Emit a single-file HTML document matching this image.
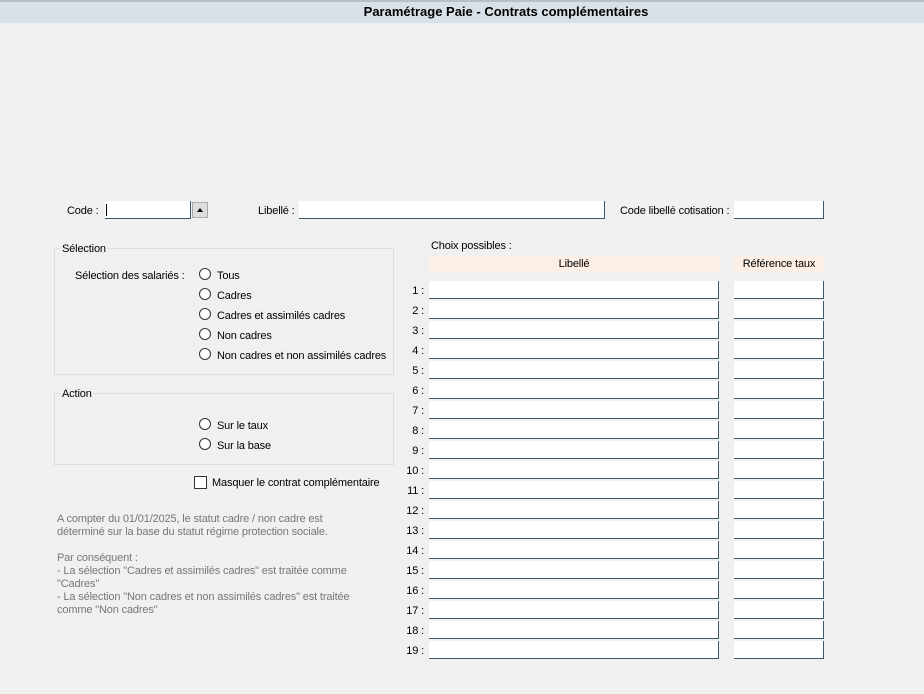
<!DOCTYPE html><html><head><style>
body{margin:0;width:924px;height:694px;background:#f0f0f0;font-family:"Liberation Sans",sans-serif;font-size:11px;letter-spacing:-0.15px;color:#000;position:relative;overflow:hidden}
.a{position:absolute;white-space:nowrap}
.in{position:absolute;background:#fff;border-right:1px solid #3a5a6c;border-bottom:1px solid #3a5a6c;box-sizing:border-box;height:18px}
.r{position:absolute;width:12px;height:12px;border:1px solid #333;border-radius:50%;background:#fff;box-sizing:border-box}
.g{position:absolute;border:1px solid #dcdcdc;box-sizing:border-box}
.n{position:absolute;width:20px;text-align:right;left:404px}
</style></head><body>
<div class="a" style="left:0;top:0;width:924px;height:23px;background:#d7e1e7;border-top:2px solid #b8c0c6;box-sizing:border-box"></div>
<div class="a" style="left:0;top:4px;width:1012px;text-align:center;font-weight:bold;font-size:13px;letter-spacing:0">Paramétrage Paie - Contrats complémentaires</div>

<div class="a" style="left:67px;top:205px">Code :</div>
<div class="in" style="left:105px;top:201px;width:86px"><div style="position:absolute;left:1px;top:3px;width:1px;height:12px;background:#000"></div></div>
<div class="a" style="left:192px;top:202px;width:16px;height:16px;background:#ddd;border:1px solid #aaa;box-sizing:border-box"><div style="position:absolute;left:4px;top:5px;border-left:3px solid transparent;border-right:3px solid transparent;border-bottom:4px solid #000"></div></div>
<div class="a" style="left:258px;top:205px">Libellé :</div>
<div class="in" style="left:299px;top:201px;width:306px"></div>
<div class="a" style="left:620px;top:205px">Code libellé cotisation :</div>
<div class="in" style="left:734px;top:201px;width:90px"></div>

<div class="g" style="left:54px;top:248px;width:340px;height:127px"></div>
<div class="a" style="left:60px;top:243px;background:#f0f0f0;padding:0 2px">Sélection</div>
<div class="a" style="left:75px;top:270px">Sélection des salariés :</div>
<div class="r" style="left:199px;top:268px"></div><div class="a" style="left:217px;top:270px">Tous</div>
<div class="r" style="left:199px;top:288px"></div><div class="a" style="left:217px;top:290px">Cadres</div>
<div class="r" style="left:199px;top:308px"></div><div class="a" style="left:217px;top:310px">Cadres et assimilés cadres</div>
<div class="r" style="left:199px;top:328px"></div><div class="a" style="left:217px;top:330px">Non cadres</div>
<div class="r" style="left:199px;top:348px"></div><div class="a" style="left:217px;top:350px">Non cadres et non assimilés cadres</div>

<div class="g" style="left:54px;top:393px;width:340px;height:72px"></div>
<div class="a" style="left:60px;top:388px;background:#f0f0f0;padding:0 2px">Action</div>
<div class="r" style="left:199px;top:418px"></div><div class="a" style="left:217px;top:420px">Sur le taux</div>
<div class="r" style="left:199px;top:438px"></div><div class="a" style="left:217px;top:440px">Sur la base</div>

<div class="a" style="left:194px;top:476px;width:13px;height:13px;border:1px solid #333;background:#fff;box-sizing:border-box"></div>
<div class="a" style="left:212px;top:477px">Masquer le contrat complémentaire</div>

<div class="a" style="left:57px;top:513px;color:#777;line-height:13px;white-space:normal;width:310px">A compter du 01/01/2025, le statut cadre / non cadre est déterminé sur la base du statut régime protection sociale.<br><br>Par conséquent :<br>- La sélection "Cadres et assimilés cadres" est traitée comme "Cadres"<br>- La sélection "Non cadres et non assimilés cadres" est traitée comme "Non cadres"</div>

<div class="a" style="left:431px;top:240px">Choix possibles :</div>
<div class="a" style="left:429px;top:256px;width:290px;height:16px;background:#fcefe6;text-align:center;line-height:17px">Libellé</div>
<div class="a" style="left:734px;top:256px;width:90px;height:16px;background:#fcefe6;text-align:center;line-height:17px">Référence taux</div>

<div id="rows"></div>
<script>
var h='';for(var i=1;i<=19;i++){var y=281+(i-1)*20;
h+='<div class="n" style="top:'+(y+4)+'px">'+i+' :</div><div class="in" style="left:429px;top:'+y+'px;width:290px"></div><div class="in" style="left:734px;top:'+y+'px;width:90px"></div>';}
document.getElementById('rows').innerHTML=h;
</script>
</body></html>
